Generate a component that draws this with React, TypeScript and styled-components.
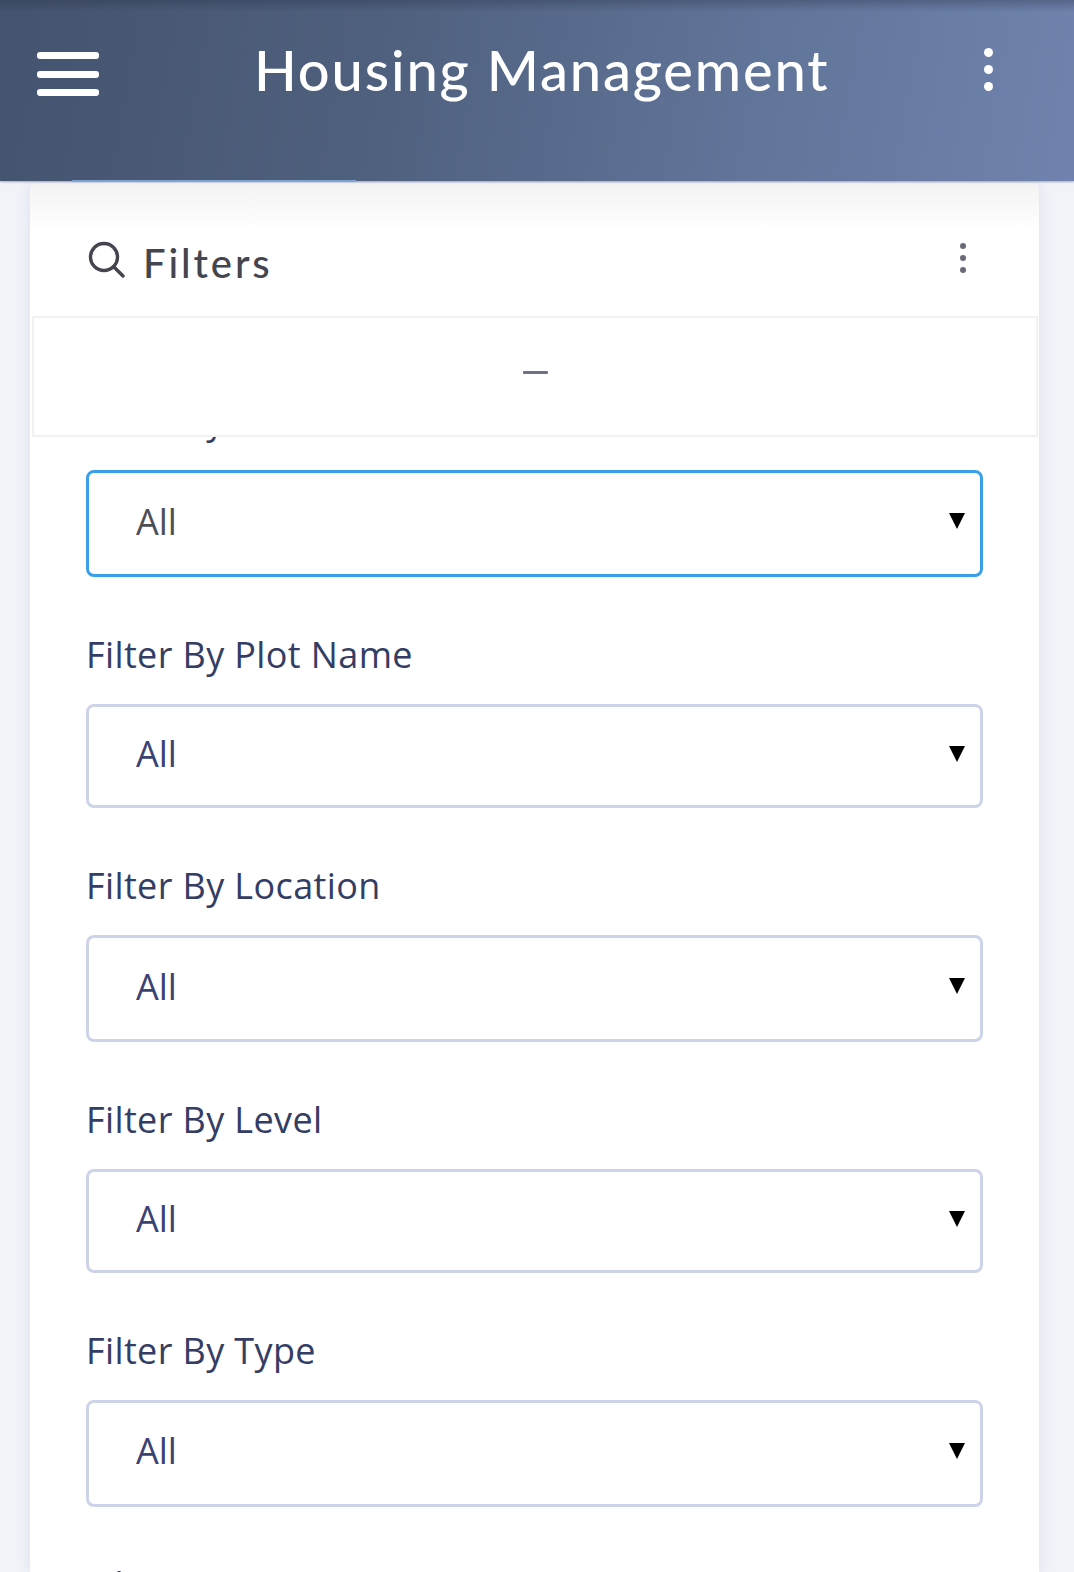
import React from "react";
import styled, { createGlobalStyle } from "styled-components";

const Global = createGlobalStyle`
  html, body { margin: 0; padding: 0; height: 1572px; overflow: hidden; background: #f1f3f9; }
  #root { height: 1572px; overflow: hidden; }
  * { box-sizing: border-box; }
`;

const Page = styled.div`
  display: flex;
  flex-direction: column;
  height: 1572px;
  overflow: hidden;
  font-family: "Open Sans", "Liberation Sans", sans-serif;
`;

const AppBar = styled.header`
  position: relative;
  z-index: 3;
  flex: 0 0 181px;
  display: grid;
  grid-template-columns: 209px 1fr 58px;
  align-items: start;
  padding: 0 57px 0 37px;
  background:
    linear-gradient(180deg, rgba(40, 48, 70, 0.35) 0, rgba(40, 48, 70, 0) 12px),
    linear-gradient(100deg, #44536e 0%, #4f607e 35%, #5f7296 65%, #6f83ae 100%);
  box-shadow: 0 1px 2px rgba(70, 90, 130, 0.5);
  &::after {
    content: "";
    position: absolute;
    left: 72px;
    bottom: -1px;
    width: 284px;
    height: 2px;
    background: #7ea4d6;
  }
`;

const MenuButton = styled.div`
  display: flex;
  flex-direction: column;
  gap: 11.5px;
  width: 62px;
  margin-top: 52px;
`;

const MenuBar = styled.span`
  height: 7px;
  border-radius: 3px;
  background: #fff;
`;

const Title = styled.h1`
  margin: 36px 0 0;
  padding-left: 8px;
  font-family: "Lato", "Open Sans", sans-serif;
  font-weight: 500;
  font-size: 56px;
  line-height: 68px;
  letter-spacing: 1.85px;
  color: #fff;
  white-space: nowrap;
`;

const Dots = styled.div<{ $size: number; $gap: number; $color: string }>`
  display: flex;
  flex-direction: column;
  align-items: center;
  gap: ${(p) => p.$gap}px;
  span {
    width: ${(p) => p.$size}px;
    height: ${(p) => p.$size}px;
    border-radius: 50%;
    background: ${(p) => p.$color};
  }
`;

const BarDots = styled(Dots)`
  justify-self: center;
  margin-top: 48px;
`;

const Card = styled.section`
  flex: 1;
  width: 1009px;
  margin: 2px 0 0 30px;
  border-radius: 8px 8px 0 0;
  background: #fff;
  box-shadow: 0 0 14px rgba(120, 125, 160, 0.16);
  overflow: hidden;
`;

const CardHeader = styled.div`
  height: 133px;
  display: flex;
  align-items: flex-start;
  justify-content: space-between;
  padding: 58px 73px 0 58px;
  background: linear-gradient(180deg, #f3f3f3 0, #ffffff 48px);
`;

const CardTitle = styled.div`
  display: flex;
  align-items: flex-start;
  gap: 18px;
  font-family: "Lato", "Open Sans", sans-serif;
  font-weight: 500;
  font-size: 40px;
  line-height: 46px;
  letter-spacing: 2.9px;
  color: #44454f;
`;

const TitleText = styled.span`
  margin-top: -1px;
`;

const HeaderDots = styled(Dots)`
  margin-top: 2px;
`;

const CollapseStrip = styled.div`
  position: relative;
  z-index: 2;
  height: 121px;
  margin: 0 1px 0 2px;
  padding-top: 53px;
  display: flex;
  justify-content: center;
  background: #fff;
  border: 2px solid #f1f1f2;
`;

const Minus = styled.span`
  width: 25px;
  height: 3px;
  border-radius: 1px;
  background: #6f7285;
`;

const Fields = styled.div`
  margin-top: -94px;
  padding: 0 56px 0 56px;
`;

const Field = styled.div`
  display: flex;
  flex-direction: column;
`;

const Label = styled.label`
  height: 127px;
  padding-top: 56px;
  font-size: 36px;
  line-height: 44px;
  letter-spacing: 0.38px;
  color: #343d63;
  white-space: nowrap;
`;

const Select = styled.div<{ $focused?: boolean; $h: number }>`
  height: ${(p) => p.$h}px;
  display: flex;
  align-items: center;
  justify-content: space-between;
  padding: 0 15px 5px 47px;
  border: 3px solid ${(p) => (p.$focused ? "#3aa0e8" : "#cdd3e8")};
  border-radius: 8px;
  background: #fff;
  font-size: 36px;
  color: ${(p) => (p.$focused ? "#4d4f57" : "#3a4374")};
`;

const Arrow = styled.svg`
  width: 16px;
  height: 18px;
  flex: none;
`;

const fields = [
  { label: "Filter By Status", h: 107, focused: true },
  { label: "Filter By Plot Name", h: 104 },
  { label: "Filter By Location", h: 107 },
  { label: "Filter By Level", h: 104 },
  { label: "Filter By Type", h: 106.5 },
  { label: "Filter By Price", h: 105 },
];

const ThreeDots = ({ as: C, ...rest }: any) => (
  <C {...rest}>
    <span />
    <span />
    <span />
  </C>
);

export default function App() {
  return (
    <Page>
      <Global />
      <AppBar>
        <MenuButton>
          <MenuBar />
          <MenuBar />
          <MenuBar />
        </MenuButton>
        <Title>Housing Management</Title>
        <ThreeDots as={BarDots} $size={9} $gap={8} $color="#fff" />
      </AppBar>
      <Card>
        <CardHeader>
          <CardTitle>
            <svg width="37" height="37" viewBox="0 0 37 37" fill="none" stroke="#44454f" strokeWidth="3.4" strokeLinecap="round">
              <circle cx="16" cy="16" r="13.5" />
              <path d="M26 26l9 9" />
            </svg>
            <TitleText>Filters</TitleText>
          </CardTitle>
          <ThreeDots as={HeaderDots} $size={6} $gap={6} $color="#6a6b78" />
        </CardHeader>
        <CollapseStrip>
          <Minus />
        </CollapseStrip>
        <Fields>
          {fields.map((f) => (
            <Field key={f.label}>
              <Label>{f.label}</Label>
              <Select $focused={f.focused} $h={f.h}>
                All
                <Arrow viewBox="0 0 16 18">
                  <path d="M0 1h16L8 17z" fill="#000" />
                </Arrow>
              </Select>
            </Field>
          ))}
        </Fields>
      </Card>
    </Page>
  );
}
